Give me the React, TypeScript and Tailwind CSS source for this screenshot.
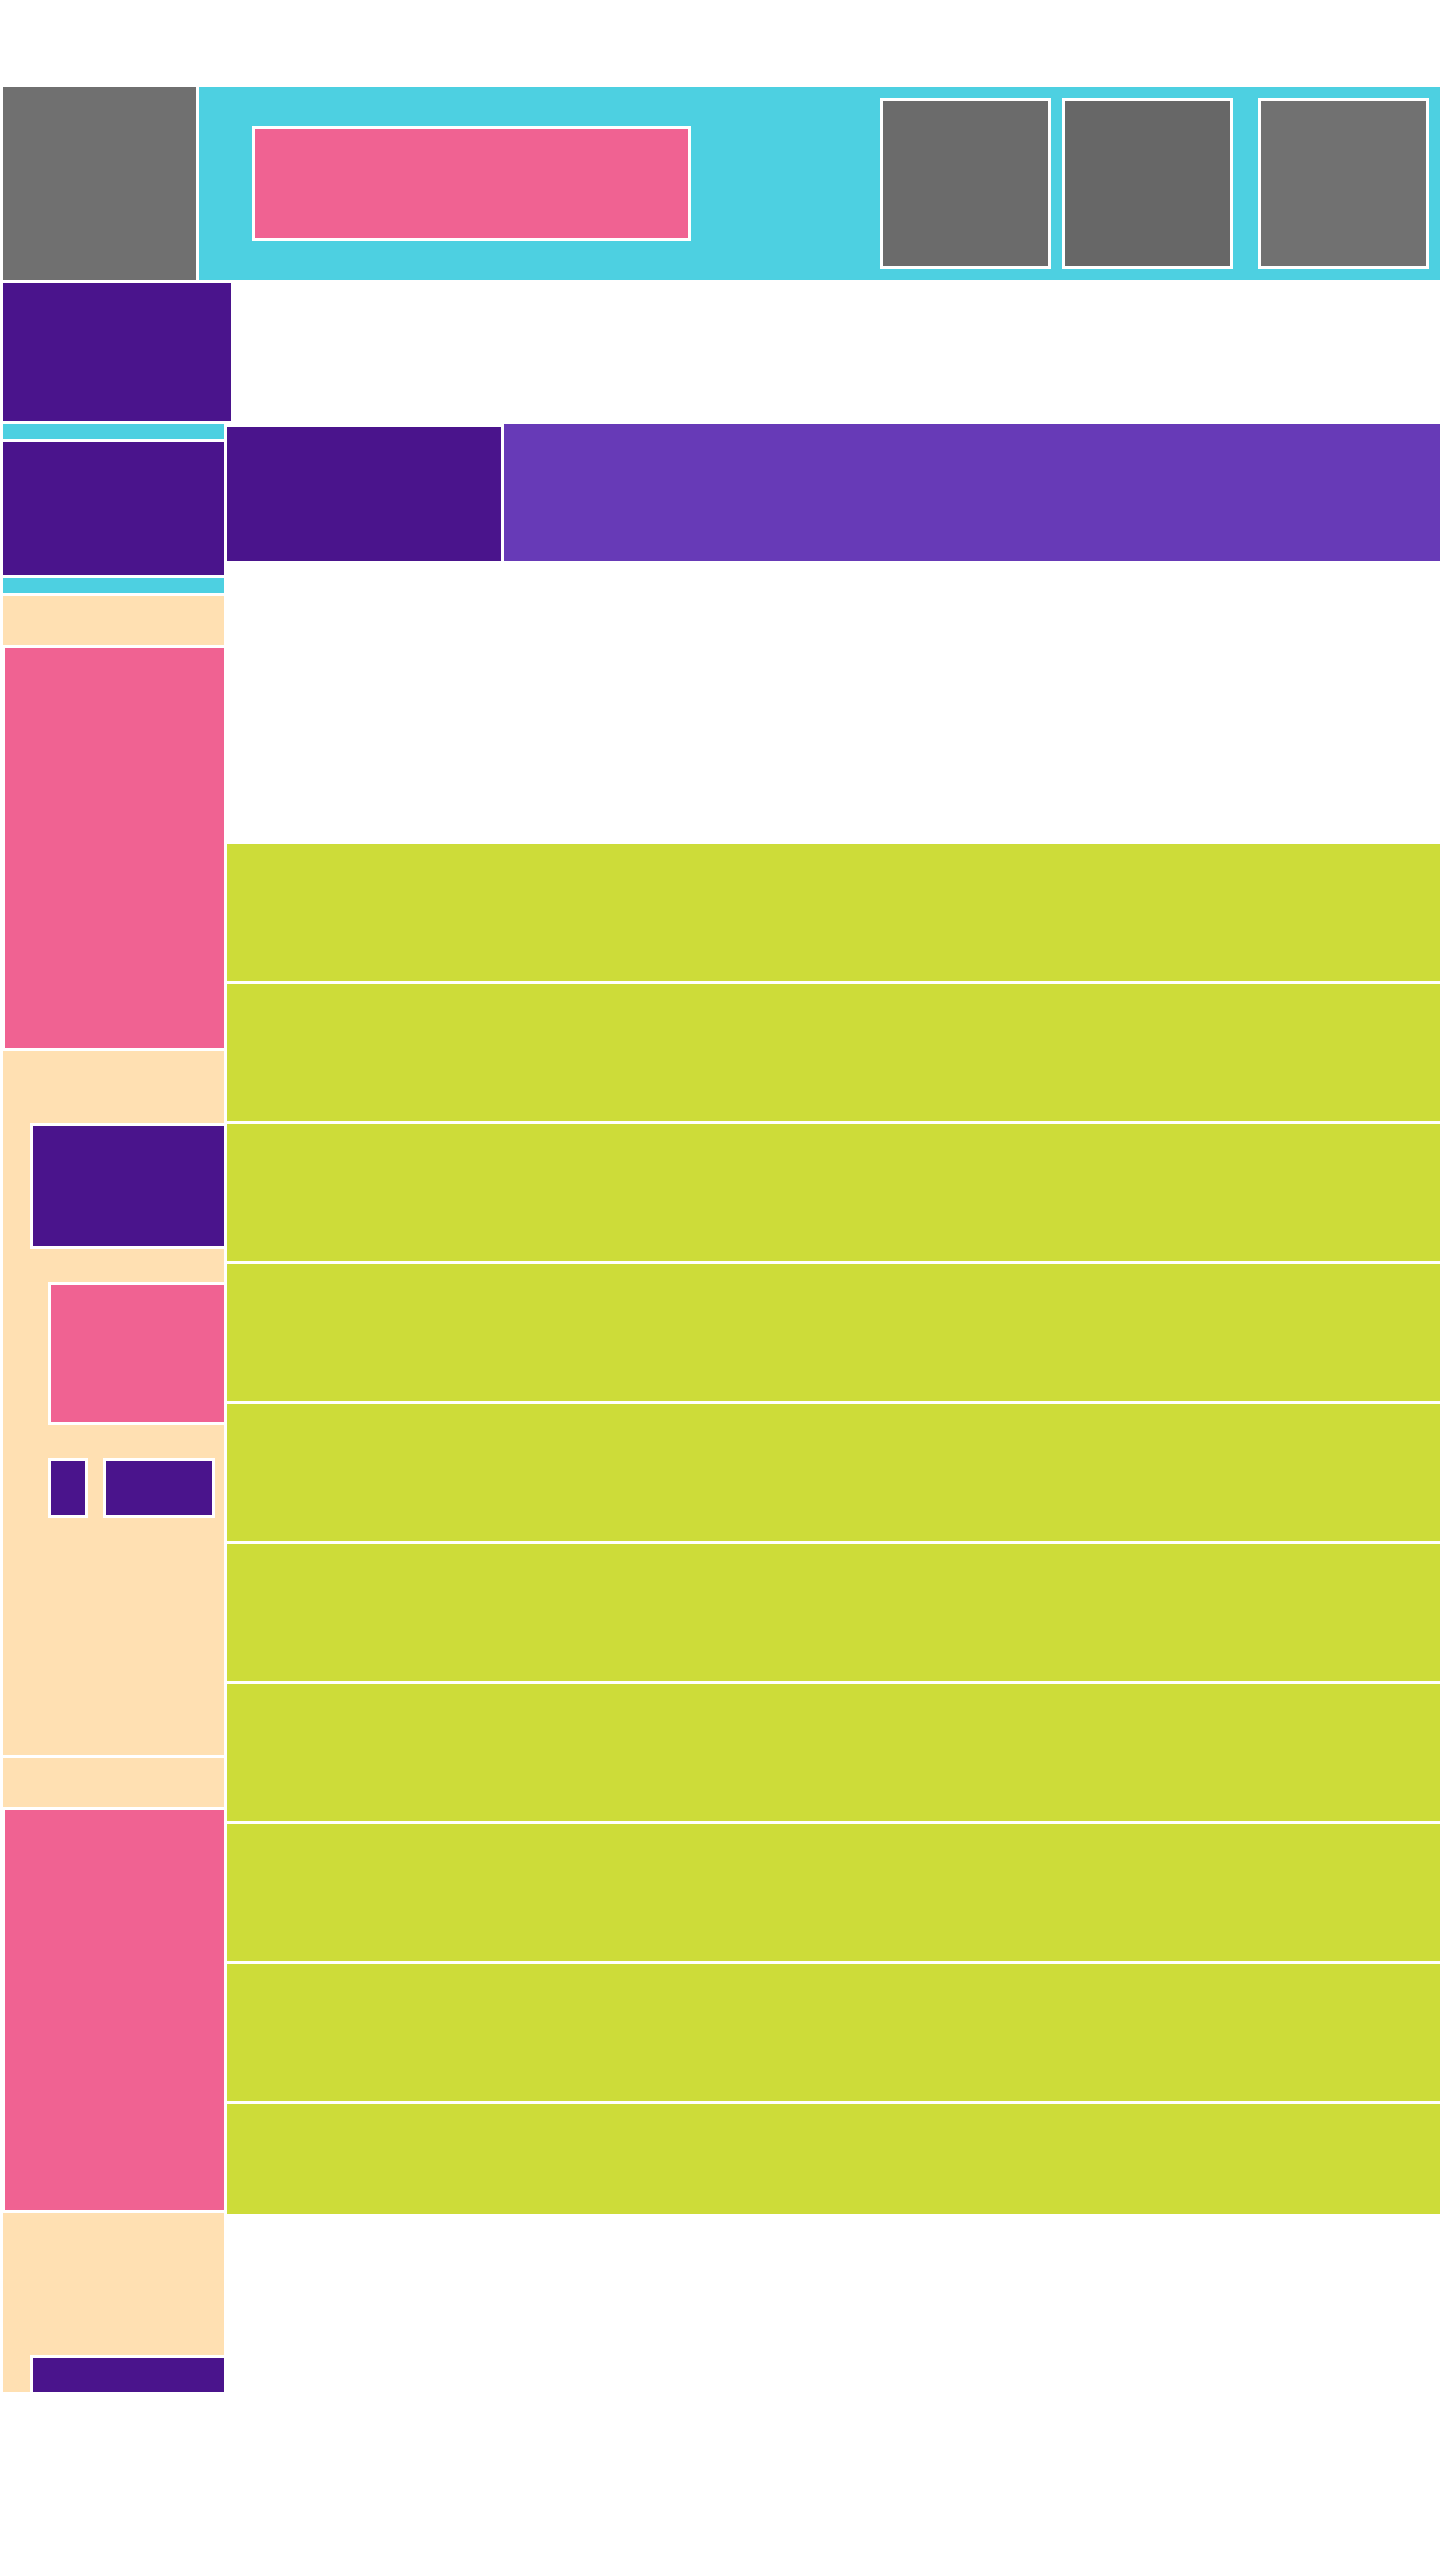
export default function App() {
  const limeRows = Array.from({ length: 10 });
  return (
    <div className="w-[1440px] min-h-[2560px] bg-white pt-[87px] flex flex-col gap-[3px]">
      {/* Header row */}
      <div className="flex h-[193px] gap-[3px] pl-[3px]">
        <div className="w-[193px] h-full bg-[#707070]" />
        <div className="flex-1 h-full bg-[#4dd0e1] flex items-center">
          <div className="ml-[53px] w-[439px] h-[115px] border-[3px] border-white bg-[#f06292]" />
          <div className="ml-auto mr-[11px] flex items-center">
            <div className="w-[171px] h-[171px] border-[3px] border-white bg-[#6b6b6b]" />
            <div className="ml-[11px] w-[171px] h-[171px] border-[3px] border-white bg-[#676767]" />
            <div className="ml-[25px] w-[171px] h-[171px] border-[3px] border-white bg-[#717171]" />
          </div>
        </div>
      </div>

      {/* Top purple block */}
      <div className="ml-[3px] w-[228px] h-[138px] bg-[#4a148c]" />

      {/* Two-column area */}
      <div className="flex items-start">
        {/* Left column */}
        <div className="ml-[3px] w-[221px] flex flex-col gap-[3px]">
          <div className="h-[15px] bg-[#4dd0e1]" />
          <div className="h-[133px] bg-[#4a148c]" />
          <div className="h-[15px] bg-[#4dd0e1]" />
          <div className="h-[49px] bg-[#ffe0b2]" />
          <div className="ml-[2px] h-[400px] bg-[#f06292]" />
          <div className="h-[704px] bg-[#ffe0b2] overflow-hidden flex flex-col pt-[72px]">
            <div className="ml-[27px] shrink-0 w-[240px] h-[126px] border-[3px] border-white bg-[#4a148c]" />
            <div className="ml-[45px] mt-[33px] shrink-0 w-[220px] h-[143px] border-[3px] border-white bg-[#f06292]" />
            <div className="ml-[45px] mt-[33px] flex gap-[15px]">
              <div className="w-[40px] h-[60px] border-[3px] border-white bg-[#4a148c]" />
              <div className="w-[112px] h-[60px] border-[3px] border-white bg-[#4a148c]" />
            </div>
          </div>
          <div className="h-[49px] bg-[#ffe0b2]" />
          <div className="ml-[2px] h-[400px] bg-[#f06292]" />
          <div className="h-[179px] bg-[#ffe0b2] overflow-hidden flex flex-col pt-[142px]">
            <div className="ml-[27px] shrink-0 w-[240px] h-[126px] border-[3px] border-white bg-[#4a148c]" />
          </div>
        </div>

        {/* Right column */}
        <div className="flex-1 flex flex-col">
          <div className="h-[137px] bg-[#673ab7] overflow-hidden">
            <div className="w-[280px] h-[140px] border-[3px] border-white bg-[#4a148c]" />
          </div>
          <div className="mt-[283px] pl-[3px] h-[1370px] overflow-hidden flex flex-col gap-[3px]">
            {limeRows.map((_, i) => (
              <div key={i} className="shrink-0 h-[137px] bg-[#cddc39]" />
            ))}
          </div>
        </div>
      </div>
    </div>
  );
}
